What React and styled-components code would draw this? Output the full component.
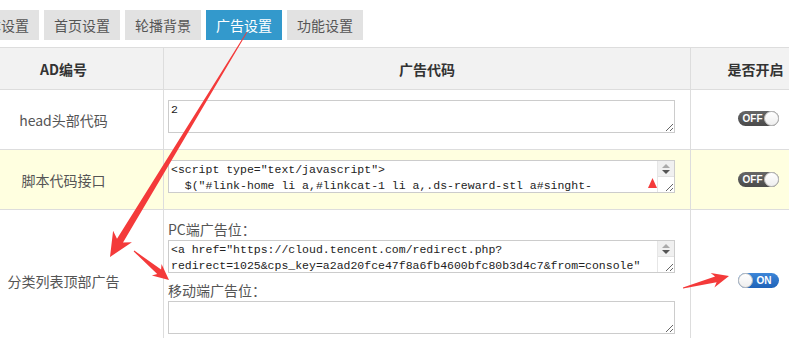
import React from 'react';
import styled, { createGlobalStyle } from 'styled-components';

const GlobalStyle = createGlobalStyle`
	html, body {
		margin: 0;
		padding: 0;
		background: #fff;
		overflow: hidden;
	}
	body {
		font-family: "Noto Sans CJK SC", "Noto Sans", sans-serif;
		color: #555;
	}
`;

const Page = styled.div`
	position: relative;
	width: 789px;
	height: 338px;
	overflow: hidden;
`;

const Shift = styled.div`
	margin-left: -37px;
	padding-top: 10px;
`;

const Tabs = styled.div`
	display: flex;
	gap: 5px;
`;

const Tab = styled.div`
	width: 76px;
	height: 30px;
	line-height: 30px;
	text-align: center;
	font-size: 14px;
	background: ${p => (p.$active ? '#3399cc' : '#e2e2e2')};
	color: ${p => (p.$active ? '#fff' : '#555')};
`;

const Table = styled.table`
	margin-top: 7px;
	width: 857px;
	table-layout: fixed;
	border-collapse: collapse;
`;

const Th = styled.th`
	height: 41px;
	padding: 0;
	background: #f2f2f2;
	border: 1px solid #ddd;
	font-size: 14px;
	font-weight: bold;
	color: #333;
	text-align: center;
`;

const Row = styled.tr`
	background: ${p => (p.$hl ? '#ffffe0' : '#fff')};
`;

const NameCell = styled.td`
	border: 1px solid #ddd;
	text-align: center;
	font-size: 14px;
	color: #555;
	padding: 0;
`;

const CodeCell = styled.td`
	border: 1px solid #ddd;
	vertical-align: top;
	padding: ${p => (p.$stack ? '9px 0 18px 4px' : '10px 0 16px 4px')};
`;

const SwitchCell = styled.td`
	border: 1px solid #ddd;
	padding: 0;
`;

const SwitchWrap = styled.div`
	display: flex;
	justify-content: center;
	align-items: center;
	padding-left: 5px;
	margin-top: ${p => (p.$up ? '-2px' : '-1px')};
`;

const Label = styled.div`
	font-size: 14px;
	line-height: 20px;
	color: #555;
	margin-top: ${p => (p.$second ? '7px' : '0')};
	margin-bottom: 1px;
`;

const Box = styled.div`
	position: relative;
	width: 507px;
	height: 33px;
`;

const Code = styled.textarea`
	display: block;
	box-sizing: border-box;
	width: 507px;
	height: 33px;
	margin: 0;
	padding: 1px 2px 0;
	border: 1px solid #ccc;
	background: #fff;
	font-family: "Liberation Mono", "DejaVu Sans Mono", monospace;
	font-size: 11.5px;
	line-height: 16px;
	color: #222;
	resize: vertical;
	overflow: hidden;
	white-space: pre;
	outline: none;
`;

const Scroll = styled.div`
	position: absolute;
	top: 1px;
	right: 1px;
	bottom: 1px;
	width: 16px;
	border-left: 1px solid #e6e6e6;
	pointer-events: none;
`;

const ScrollButtons = styled.div`
	height: 15px;
	background: #f0f0f0;
	border-bottom: 1px solid #e2e2e2;
	display: flex;
	flex-direction: column;
	align-items: center;
	justify-content: center;
	gap: 2px;
`;

const Tri = styled.span`
	width: 0;
	height: 0;
	border-left: 4px solid transparent;
	border-right: 4px solid transparent;
	${p => (p.$down
		? 'border-top: 4px solid #555;'
		: 'border-bottom: 4px solid #aaa;')}
`;

const Toggle = styled.span`
	position: relative;
	display: flex;
	align-items: center;
	justify-content: ${p => (p.$on ? 'flex-end' : 'flex-start')};
	box-sizing: border-box;
	width: 41px;
	height: 15px;
	padding: 0 ${p => (p.$on ? '7px' : '0')} 0 ${p => (p.$on ? '0' : '5px')};
	border-radius: 8px;
	background: ${p => (p.$on
		? 'linear-gradient(#3d86d8, #1e62b8)'
		: 'linear-gradient(#666, #4a4a4a)')};
	color: #fff;
	font-family: "Liberation Sans", Arial, sans-serif;
	font-size: 10px;
	line-height: 15px;
	font-weight: bold;
`;

const Knob = styled.span`
	position: absolute;
	top: 0;
	${p => (p.$on ? 'left: 0;' : 'right: 0;')}
	box-sizing: border-box;
	width: 15px;
	height: 15px;
	border-radius: 50%;
	background: linear-gradient(#fff, #eee);
	border: 1px solid #bbb;
`;

const Overlay = styled.svg`
	position: absolute;
	top: 0;
	left: 0;
	pointer-events: none;
`;

function arrow(x1, y1, x2, y2, w1, w2, hl, hw) {
	const L = Math.hypot(x2 - x1, y2 - y1);
	const ux = (x2 - x1) / L, uy = (y2 - y1) / L;
	const nx = -uy, ny = ux;
	const bx = x2 - ux * hl, by = y2 - uy * hl;
	const cx = x2 - ux * hl * 0.8, cy = y2 - uy * hl * 0.8;
	const pts = [
		[x1 + nx * w1 / 2, y1 + ny * w1 / 2],
		[cx + nx * w2 / 2, cy + ny * w2 / 2],
		[bx + nx * hw / 2, by + ny * hw / 2],
		[x2, y2],
		[bx - nx * hw / 2, by - ny * hw / 2],
		[cx - nx * w2 / 2, cy - ny * w2 / 2],
		[x1 - nx * w1 / 2, y1 - ny * w1 / 2],
	];
	return pts.map(p => p.map(v => v.toFixed(1)).join(',')).join(' ');
}

const tabs = ['基本设置', '首页设置', '轮播背景', '广告设置', '功能设置'];

function Fake() {
	return (
		<Scroll>
			<ScrollButtons>
				<Tri />
				<Tri $down />
			</ScrollButtons>
		</Scroll>
	);
}

export default function App() {
	return (
		<Page>
			<GlobalStyle />
			<Shift>
				<Tabs>
					{tabs.map(t => (
						<Tab key={t} $active={t === '广告设置'}>{t}</Tab>
					))}
				</Tabs>
				<Table>
					<colgroup>
						<col style={{ width: 200 }} />
						<col style={{ width: 527 }} />
						<col style={{ width: 130 }} />
					</colgroup>
					<thead>
						<tr>
							<Th>AD编号</Th>
							<Th>广告代码</Th>
							<Th>是否开启</Th>
						</tr>
					</thead>
					<tbody>
						<Row>
							<NameCell>head头部代码</NameCell>
							<CodeCell>
								<Box>
									<Code wrap="off" defaultValue="2" />
								</Box>
							</CodeCell>
							<SwitchCell>
								<SwitchWrap $up>
									<Toggle>OFF<Knob /></Toggle>
								</SwitchWrap>
							</SwitchCell>
						</Row>
						<Row $hl>
							<NameCell>脚本代码接口</NameCell>
							<CodeCell>
								<Box>
									<Code
										wrap="off"
										defaultValue={'<script type="text/javascript">\n  $("#link-home li a,#linkcat-1 li a,.ds-reward-stl a#singht-'}
									/>
									<Fake />
								</Box>
							</CodeCell>
							<SwitchCell>
								<SwitchWrap>
									<Toggle>OFF<Knob /></Toggle>
								</SwitchWrap>
							</SwitchCell>
						</Row>
						<Row>
							<NameCell>分类列表顶部广告</NameCell>
							<CodeCell $stack>
								<Label>PC端广告位：</Label>
								<Box>
									<Code
										wrap="off"
										defaultValue={'<a href="https://cloud.tencent.com/redirect.php?\nredirect=1025&cps_key=a2ad20fce47f8a6fb4600bfc80b3d4c7&from=console"'}
									/>
									<Fake />
								</Box>
								<Label $second>移动端广告位：</Label>
								<Box>
									<Code wrap="off" defaultValue="" />
								</Box>
							</CodeCell>
							<SwitchCell>
								<SwitchWrap>
									<Toggle $on><Knob $on />ON</Toggle>
								</SwitchWrap>
							</SwitchCell>
						</Row>
					</tbody>
				</Table>
			</Shift>
			<Overlay width="789" height="338" viewBox="0 0 789 338">
				<g fill="#f43a3a">
					<polygon points={arrow(247, 32, 110, 257, 0.6, 7, 24, 22)} />
					<polygon points={arrow(134, 251, 169, 280, 1, 6, 16, 15)} />
					<polygon points={arrow(683, 288, 729, 276, 1, 6, 17, 15)} />
					<polygon points="652.5,178 657,188 648,188" />
				</g>
			</Overlay>
		</Page>
	);
}
